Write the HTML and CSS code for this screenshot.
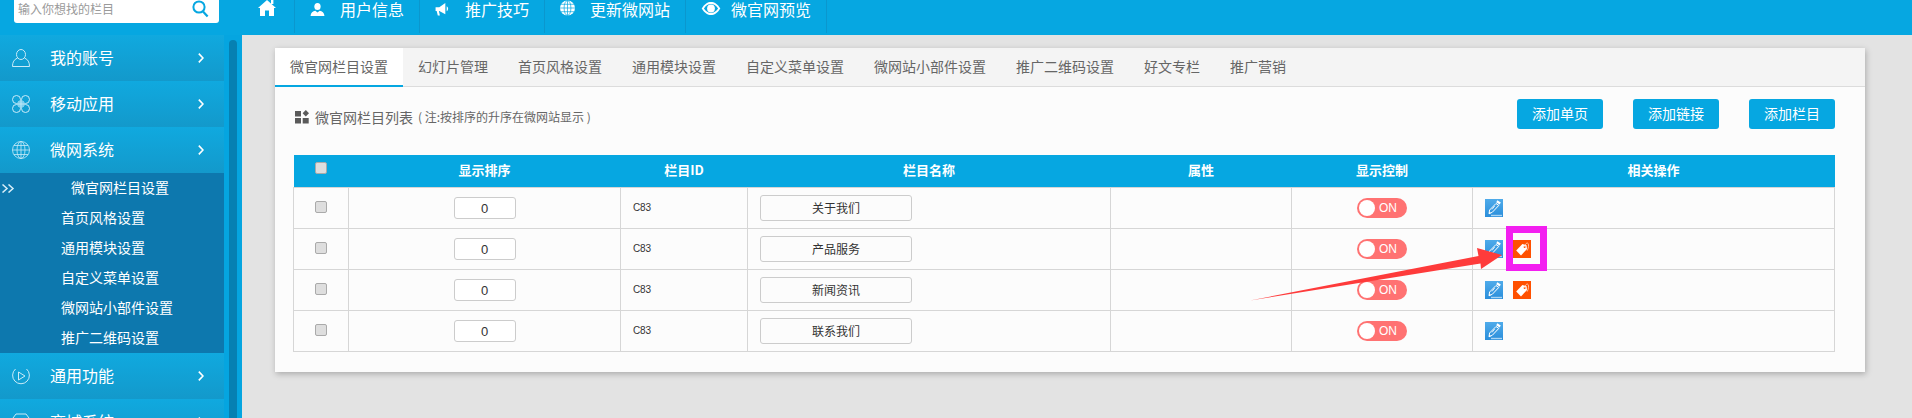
FILE: index.html
```html
<!DOCTYPE html>
<html lang="zh-CN">
<head>
    <meta charset="UTF-8">
    <title>微官网栏目设置</title>
    <link rel="stylesheet" href="styles.css">
</head>
<body>

<svg class="defs" width="0" height="0">
    <symbol id="i-edit" viewBox="0 0 18 18">
        <path d="M11 4.500 L13.800 6.400 L7.400 13.200 L4 14.800 L4.600 11 Z" fill="none" stroke="#fff"/>
        <path d="M12.400 1.200 L15.800 3.400 L14.600 5.400 L11.200 3.200 Z" fill="#fff"/>
        <path d="M4 14.800 L4.300 12.800 L6 14 Z" fill="#fff"/>
        <path d="M9.700 7 L7 10.400" stroke="#fff" stroke-width=".8"/>
        <rect x="6" y="15.800" width="11" height="1.400" fill="#a9d5f5"/>
    </symbol>
    <symbol id="i-tag" viewBox="0 0 18 18">
        <path d="M9.400 4 L13.600 5.200 L14 9 L8 15.400 L3.200 10.400 Z" fill="#fff"/>
        <circle cx="11.600" cy="7" r="1" fill="#ff5000"/>
        <path d="M11.600 6.800 C12 3.600 14.400 2.200 15.200 3.600 C15.900 5 15.600 8 14.200 10.600" fill="none" stroke="#ffd9c6" stroke-width=".8"/>
    </symbol>
</svg>

<header class="topbar">
    <div class="search-wrap">
        <div class="search">
            <span class="search-text">输入你想找的栏目</span>
            <svg width="17" height="18" viewBox="0 0 17 18" fill="none" stroke="#06a7e1">
                <circle cx="7" cy="7" r="5.600" stroke-width="2"/>
                <path d="M11 11.500 L15.600 16.600" stroke-width="2.200"/>
            </svg>
        </div>
    </div>
    <nav class="topnav">
        <a class="topnav-item home">
            <svg width="18" height="16" viewBox="0 0 18 16" fill="#fff">
                <path d="M9 0 L18 8 L16 8 L16 16 L11 16 L11 10.500 L7 10.500 L7 16 L2 16 L2 8 L0 8 Z"/>
                <rect x="13" y="0" width="2.400" height="4"/>
            </svg>
        </a>
        <a class="topnav-item">
            <span class="topnav-icon">
                <svg class="nudge" width="15" height="13" viewBox="0 0 16 14" fill="#fff">
                    <ellipse cx="8" cy="3.800" rx="3.400" ry="3.800"/>
                    <path d="M0.500 14 C0.800 10.500 3 9 5.600 8.400 L8 10.200 L10.400 8.400 C13 9 15.200 10.500 15.500 14 Z"/>
                </svg>
            </span>
            用户信息
        </a>
        <a class="topnav-item">
            <span class="topnav-icon">
                <svg class="nudge" width="16" height="13" viewBox="0 0 16 14" fill="#fff">
                    <path d="M0 4.500 L4 4.500 L10.500 0 L10.500 12 L4 8.500 L3.600 8.500 L4.600 13.500 L2.400 13.500 L1.200 8.500 L0 8.500 Z"/>
                    <path d="M12 3.500 C14 4.600 14 7.600 12 9 Z"/>
                </svg>
            </span>
            推广技巧
        </a>
        <a class="topnav-item">
            <span class="topnav-icon">
                <svg width="15" height="16" viewBox="0 0 15 15" fill="#fff" stroke="#06a7e1" stroke-width=".7">
                    <circle cx="7.500" cy="7.500" r="7.500" stroke="none"/>
                    <ellipse cx="7.500" cy="7.500" rx="3.400" ry="7.500" fill="none"/>
                    <path d="M7.500 0 V15 M0 7.500 H15 M1 3.800 H14 M1 11.200 H14" fill="none"/>
                </svg>
            </span>
            更新微网站
        </a>
        <a class="topnav-item">
            <span class="topnav-icon">
                <svg class="nudge-eye" width="20" height="13" viewBox="0 0 20 14">
                    <path d="M0 7 C3 2 6.500 0 10 0 C13.500 0 17 2 20 7 C17 12 13.500 14 10 14 C6.500 14 3 12 0 7 Z" fill="#fff"/>
                    <path d="M2.400 7 C4.500 3.800 7 2.200 10 2.200 C13 2.200 15.500 3.800 17.600 7 C15.500 10.200 13 11.800 10 11.800 C7 11.800 4.500 10.200 2.400 7 Z" fill="#06a7e1"/>
                    <circle cx="10" cy="7" r="4.200" fill="#fff"/>
                </svg>
            </span>
            微官网预览
        </a>
    </nav>
</header>

<div class="layout">
    <aside class="sidebar">
        <ul class="menu">
            <li class="menu-item">
                <svg class="menu-icon" width="18" height="18" viewBox="0 0 18 18" fill="none" stroke="#c9ebf8">
                    <ellipse cx="9" cy="5.500" rx="4.500" ry="5"/>
                    <path d="M5.500 9 C2 10.500 .5 13 .5 17.500 H17.500 C17.500 13 16 10.500 12.500 9"/>
                </svg>
                <span class="menu-text">我的账号</span>
                <svg class="chevron" width="6" height="10" viewBox="0 0 6 10" fill="none" stroke="#fff" stroke-width="1.600"><path d="M.8 .6 L5 5 L.8 9.400"/></svg>
            </li>
            <li class="menu-item">
                <svg class="menu-icon" width="18" height="18" viewBox="0 0 18 18" fill="none" stroke="#c9ebf8">
                    <circle cx="4.500" cy="4.500" r="4"/>
                    <circle cx="13.500" cy="4.500" r="4"/>
                    <circle cx="4.500" cy="13.500" r="4"/>
                    <circle cx="13.500" cy="13.500" r="4"/>
                    <rect x="6" y="6" width="6" height="6" fill="#7fd0ee" stroke="none"/>
                    <path d="M9 5.500 V12.500 M5.500 9 H12.500" stroke-width=".8"/>
                </svg>
                <span class="menu-text">移动应用</span>
                <svg class="chevron" width="6" height="10" viewBox="0 0 6 10" fill="none" stroke="#fff" stroke-width="1.600"><path d="M.8 .6 L5 5 L.8 9.400"/></svg>
            </li>
            <li class="menu-item">
                <svg class="menu-icon" width="18" height="18" viewBox="0 0 18 18" fill="none" stroke="#c9ebf8" stroke-width=".8">
                    <circle cx="9" cy="9" r="8.500"/>
                    <ellipse cx="9" cy="9" rx="4" ry="8.500"/>
                    <path d="M9 .5 V17.500 M.5 9 H17.500 M1.800 4.500 H16.200 M1.800 13.500 H16.200"/>
                </svg>
                <span class="menu-text">微网系统</span>
                <svg class="chevron" width="6" height="10" viewBox="0 0 6 10" fill="none" stroke="#fff" stroke-width="1.600"><path d="M.8 .6 L5 5 L.8 9.400"/></svg>
            </li>
            <li>
                <ul class="submenu">
                    <li class="submenu-item active">
                        <svg class="double-chevron" width="13" height="9" viewBox="0 0 13 9" fill="none" stroke="#d8eef8" stroke-width="1.500"><path d="M.5 .5 L5 4.500 L.5 8.500 M6.500 .5 L11 4.500 L6.500 8.500"/></svg>
                        <span>微官网栏目设置</span>
                    </li>
                    <li class="submenu-item"><span>首页风格设置</span></li>
                    <li class="submenu-item"><span>通用模块设置</span></li>
                    <li class="submenu-item"><span>自定义菜单设置</span></li>
                    <li class="submenu-item"><span>微网站小部件设置</span></li>
                    <li class="submenu-item"><span>推广二维码设置</span></li>
                </ul>
            </li>
            <li class="menu-item">
                <svg class="menu-icon" width="18" height="18" viewBox="0 0 18 18" fill="none" stroke="#c9ebf8">
                    <path d="M3.500 2 A8.400 8.400 0 1 0 14.500 2"/>
                    <path d="M6.500 5 L13 9 L6.500 13 Z"/>
                </svg>
                <span class="menu-text">通用功能</span>
                <svg class="chevron" width="6" height="10" viewBox="0 0 6 10" fill="none" stroke="#fff" stroke-width="1.600"><path d="M.8 .6 L5 5 L.8 9.400"/></svg>
            </li>
            <li class="menu-item">
                <svg class="menu-icon" width="18" height="18" viewBox="0 0 18 18" fill="none" stroke="#c9ebf8">
                    <path d="M1 5 L4 1 H14 L17 5 V17 H1 Z"/>
                </svg>
                <span class="menu-text">商城系统</span>
                <svg class="chevron" width="6" height="10" viewBox="0 0 6 10" fill="none" stroke="#fff" stroke-width="1.600"><path d="M.8 .6 L5 5 L.8 9.400"/></svg>
            </li>
        </ul>
        <div class="scroll-track">
            <div class="scroll-thumb"></div>
        </div>
    </aside>

    <main class="content">
        <section class="card">
            <div class="tabs">
                <a class="tab active">微官网栏目设置</a>
                <a class="tab">幻灯片管理</a>
                <a class="tab">首页风格设置</a>
                <a class="tab">通用模块设置</a>
                <a class="tab">自定义菜单设置</a>
                <a class="tab">微网站小部件设置</a>
                <a class="tab">推广二维码设置</a>
                <a class="tab">好文专栏</a>
                <a class="tab">推广营销</a>
            </div>

            <div class="toolbar">
                <div class="list-title">
                    <svg width="14" height="14" viewBox="0 0 14 14" fill="#5a5a5a">
                        <rect x="0" y="1" width="6" height="5.500"/>
                        <path d="M10.800 0 L14 3.200 L10.800 6.400 L7.600 3.200 Z"/>
                        <rect x="0" y="8" width="6" height="5.500"/>
                        <rect x="7.700" y="8" width="6" height="5.500"/>
                    </svg>
                    <span class="list-name">微官网栏目列表</span>
                    <span class="list-note">( 注:按排序的升序在微网站显示 )</span>
                </div>
                <div class="actions">
                    <a class="btn">添加单页</a>
                    <a class="btn">添加链接</a>
                    <a class="btn">添加栏目</a>
                </div>
            </div>

            <table class="cols">
                <thead>
                    <tr>
                        <th class="c-check"><span class="check head-check"></span></th>
                        <th class="c-order"><span class="th-text">显示排序</span></th>
                        <th class="c-id"><span class="th-text">栏目ID</span></th>
                        <th class="c-name"><span class="th-text">栏目名称</span></th>
                        <th class="c-attr"><span class="th-text">属性</span></th>
                        <th class="c-show"><span class="th-text">显示控制</span></th>
                        <th class="c-ops"><span class="th-text">相关操作</span></th>
                    </tr>
                </thead>
                <tbody>
                    <tr>
                        <td><span class="check"></span></td>
                        <td class="center"><span class="order-input">0</span></td>
                        <td class="id-cell">C83</td>
                        <td><span class="name-input">关于我们</span></td>
                        <td></td>
                        <td class="center"><span class="switch"><i class="knob"></i>ON</span></td>
                        <td class="ops"><svg class="op edit"><use href="#i-edit"/></svg></td>
                    </tr>
                    <tr>
                        <td><span class="check"></span></td>
                        <td class="center"><span class="order-input">0</span></td>
                        <td class="id-cell">C83</td>
                        <td><span class="name-input">产品服务</span></td>
                        <td></td>
                        <td class="center"><span class="switch"><i class="knob"></i>ON</span></td>
                        <td class="ops"><svg class="op edit"><use href="#i-edit"/></svg><svg class="op tag"><use href="#i-tag"/></svg></td>
                    </tr>
                    <tr>
                        <td><span class="check"></span></td>
                        <td class="center"><span class="order-input">0</span></td>
                        <td class="id-cell">C83</td>
                        <td><span class="name-input">新闻资讯</span></td>
                        <td></td>
                        <td class="center"><span class="switch"><i class="knob"></i>ON</span></td>
                        <td class="ops"><svg class="op edit"><use href="#i-edit"/></svg><svg class="op tag"><use href="#i-tag"/></svg></td>
                    </tr>
                    <tr>
                        <td><span class="check"></span></td>
                        <td class="center"><span class="order-input">0</span></td>
                        <td class="id-cell">C83</td>
                        <td><span class="name-input">联系我们</span></td>
                        <td></td>
                        <td class="center"><span class="switch"><i class="knob"></i>ON</span></td>
                        <td class="ops"><svg class="op edit"><use href="#i-edit"/></svg></td>
                    </tr>
                </tbody>
            </table>
        </section>
    </main>
</div>

<!-- annotation drawn over the screenshot -->
<svg class="markup" width="1912" height="418" viewBox="0 0 1912 418">
    <rect x="1509.500" y="229.500" width="34" height="38" fill="none" stroke="#f31ff0" stroke-width="7"/>
    <path d="M1250 300.500 L1478.500 256 L1477 248 L1502 255 L1481 269 L1480.500 263.500 Z" fill="#fe3b3b"/>
</svg>

</body>
</html>
```

FILE: styles.css
```css
* {
    margin: 0;
    padding: 0;
    box-sizing: border-box;
}

html, body {
    height: 418px;
    overflow: hidden;
}

body {
    position: relative;
    font-family: "Noto Sans CJK SC", "Liberation Sans", sans-serif;
    background-color: #e3e3e3;
    color: #333;
}

ul {
    list-style: none;
}

.defs {
    position: absolute;
}

.markup {
    position: absolute;
    top: 0;
    left: 0;
}

/* top bar */
.topbar {
    display: flex;
    height: 35px;
    background-color: #06a7e1;
}

.search-wrap {
    width: 242px;
    padding-left: 14px;
}

.search {
    display: flex;
    justify-content: space-between;
    width: 205px;
    height: 23px;
    padding: 0 10px 0 4px;
    background-color: #fff;
    border-radius: 0 0 3px 3px;
}

.search-text {
    font-size: 12px;
    line-height: 17px;
    color: #9a9a9a;
}

.topnav {
    display: flex;
    height: 33px;
}

.topnav-item {
    display: flex;
    align-items: flex-start;
    padding: 0 15px;
    font-size: 16px;
    line-height: 18px;
    color: #fff;
    border-right: 1px solid #0a97ce;
}

.topnav-item.home {
    width: 53px;
    padding: 0 16px;
}

.topnav-icon {
    display: flex;
    flex-shrink: 0;
    width: 30px;
}

.nudge {
    margin-top: 3px;
}

.nudge-eye {
    margin-top: 2px;
}

/* sidebar */
.layout {
    display: flex;
    height: 383px;
    overflow: hidden;
}

.sidebar {
    display: flex;
    flex-shrink: 0;
    width: 242px;
    background-color: #05a5e0;
}

.menu {
    width: 224px;
}

.menu-item {
    display: flex;
    align-items: center;
    height: 46px;
    padding-left: 12px;
    color: #fff;
    background: linear-gradient(#10a9df, #1399cb);
}

.menu-text {
    width: 148px;
    margin: 0 0 2px 20px;
    font-size: 16px;
}

.submenu {
    background-color: #0d78ae;
}

.submenu-item {
    display: flex;
    align-items: center;
    height: 30px;
    padding-left: 61px;
    font-size: 14px;
    color: #fff;
}

.submenu-item span {
    margin-bottom: 2px;
}

.submenu-item.active {
    padding-left: 2px;
}

.double-chevron {
    margin-right: 56px;
}

.scroll-track {
    display: flex;
    padding: 5px 0 0 5px;
}

.scroll-thumb {
    width: 8px;
    background-color: #0680b2;
    border-radius: 4px 4px 0 0;
}

/* content */
.content {
    padding: 13px 0 0 33px;
}

.card {
    width: 1590px;
    height: 324px;
    background-color: #fcfcfc;
    box-shadow: 1px 2px 6px rgba(0, 0, 0, 0.25);
}

.tabs {
    display: flex;
    height: 39px;
    background-color: #f4f4f4;
    border-bottom: 1px solid #dcdcdc;
}

.tab {
    height: 39px;
    padding: 0 15px;
    font-size: 14px;
    line-height: 36px;
    color: #666;
}

.tab.active {
    background-color: #fff;
    border-bottom: 2px solid #06a7e1;
}

.toolbar {
    display: flex;
    justify-content: space-between;
    align-items: center;
    padding: 12px 30px 26px 20px;
}

.list-title {
    display: flex;
    align-items: center;
    padding-top: 5px;
    color: #666;
}

.list-name {
    margin-left: 6px;
    font-size: 14px;
}

.list-note {
    margin-left: 5px;
    font-size: 12px;
}

.actions {
    display: flex;
    gap: 30px;
}

.btn {
    width: 86px;
    height: 30px;
    font-size: 14px;
    line-height: 28px;
    text-align: center;
    color: #fff;
    background-color: #06a7e1;
    border-radius: 3px;
}

/* table */
.cols {
    width: 1541px;
    margin-left: 18px;
    table-layout: fixed;
    border-collapse: collapse;
}

.cols th {
    height: 32px;
    font-size: 13px;
    color: #fff;
    background-color: #06a7e1;
}

.th-text {
    display: block;
    margin-bottom: 2px;
}

.cols td {
    height: 41px;
    font-size: 12px;
    border: 1px solid #d6d6d6;
}

.c-check { width: 55px; }
.c-order { width: 272px; }
.c-id { width: 127px; }
.c-name { width: 363px; }
.c-attr { width: 181px; }
.c-show { width: 181px; }
.c-ops { width: 362px; }

.center {
    text-align: center;
}

.check {
    display: block;
    width: 12px;
    height: 12px;
    margin: -1px auto 0;
    background-color: #dedede;
    border: 1px solid #aaa;
    border-radius: 2px;
}

.head-check {
    margin: -6px 0 0 21px;
}

.order-input {
    display: inline-block;
    width: 62px;
    height: 22px;
    font-family: "Liberation Sans", sans-serif;
    font-size: 13px;
    line-height: 21px;
    text-align: center;
    vertical-align: middle;
    background-color: #fff;
    border: 1px solid #ccc;
    border-radius: 3px;
}

.cols .id-cell {
    padding-left: 12px;
    font-family: "Liberation Sans", sans-serif;
    font-size: 10px;
    letter-spacing: -0.2px;
}

.name-input {
    display: block;
    width: 152px;
    height: 26px;
    margin-left: 12px;
    line-height: 24px;
    text-align: center;
    border: 1px solid #ccc;
    border-radius: 3px;
}

.switch {
    display: inline-flex;
    align-items: center;
    width: 50px;
    height: 20px;
    padding-left: 2px;
    font-family: "Liberation Sans", sans-serif;
    font-size: 12px;
    color: #fff;
    vertical-align: middle;
    background-color: #ff7272;
    border-radius: 10px;
}

.knob {
    width: 16px;
    height: 16px;
    margin-right: 4px;
    background-color: #fff;
    border-radius: 50%;
}

.ops {
    padding-left: 12px;
}

.op {
    display: inline-block;
    width: 18px;
    height: 18px;
    margin-right: 10px;
    vertical-align: middle;
}

.edit {
    background: linear-gradient(#4fabea, #2a8edb);
}

.tag {
    background-color: #ff5000;
}
```
